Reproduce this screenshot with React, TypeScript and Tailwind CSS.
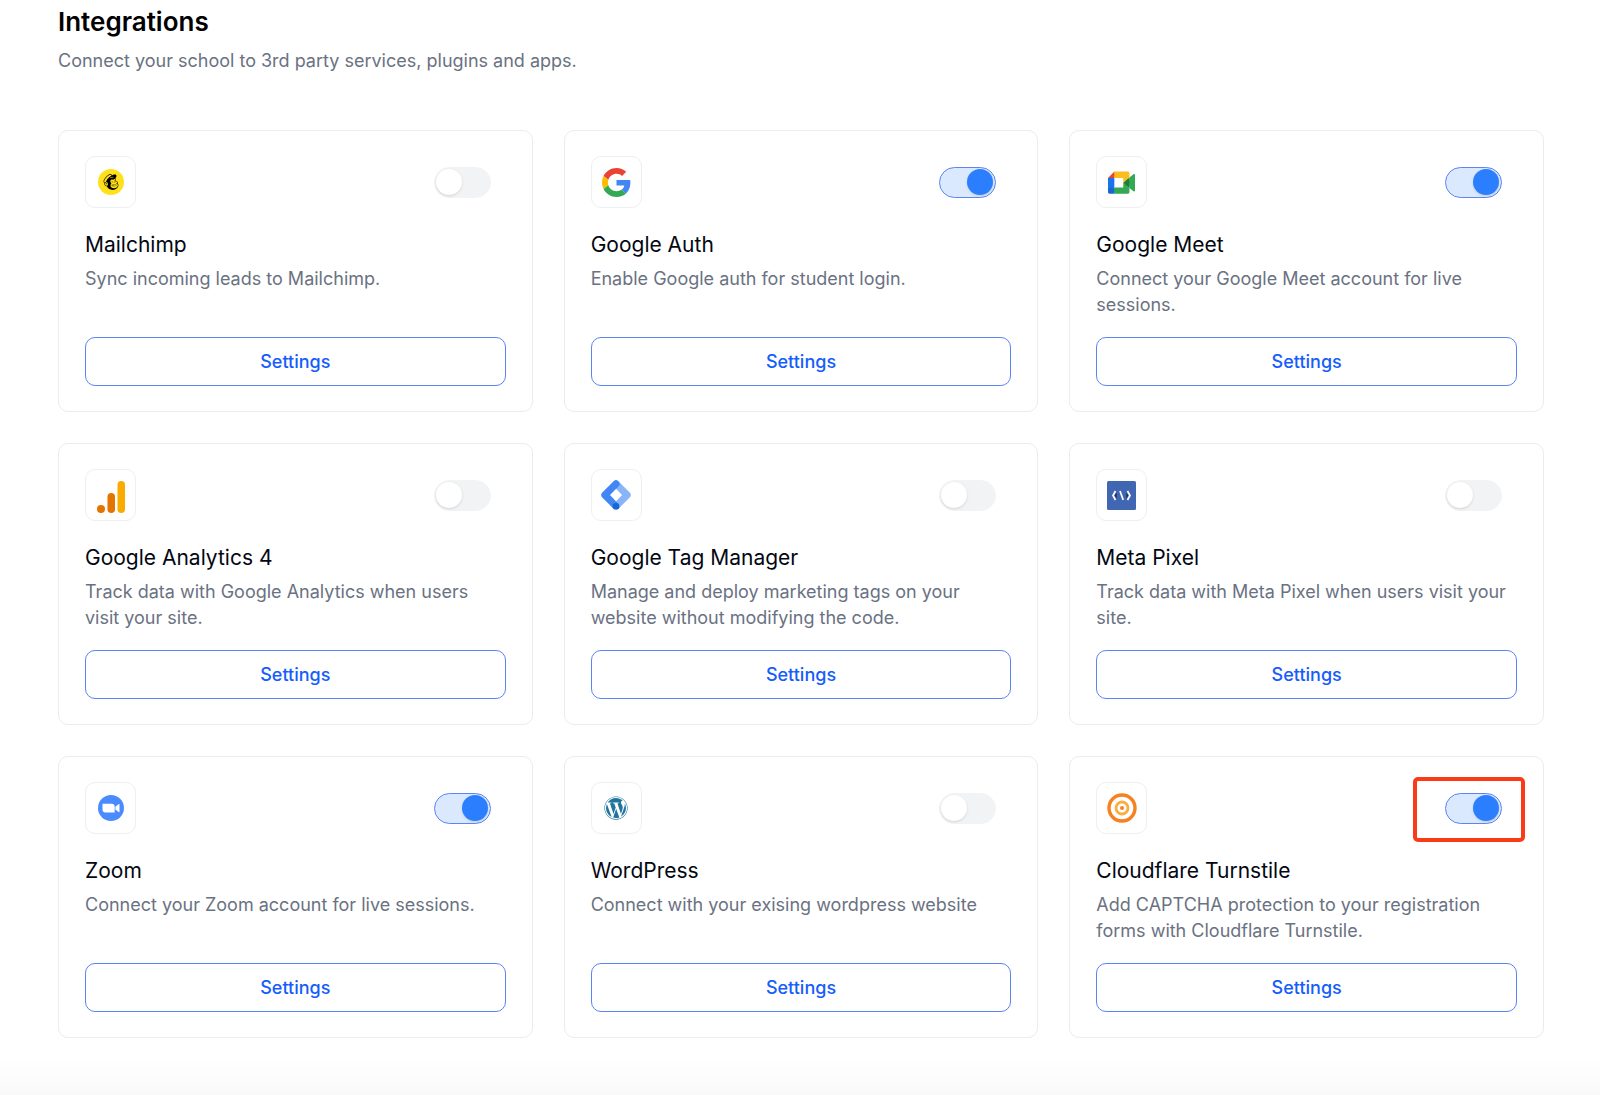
import React, { useState } from 'react';
import { FaMailchimp, FaWordpress } from 'react-icons/fa';

interface Integration {
  id: string;
  name: string;
  description: string;
  icon: React.ReactNode;
  enabled: boolean;
  highlighted?: boolean;
}

const MailchimpIcon = () => (
  <span className="flex size-[26px] items-center justify-center rounded-full bg-[#ffe01b]">
    <FaMailchimp className="size-[18px] text-black" />
  </span>
);

const GoogleIcon = () => (
  <svg viewBox="0 0 48 48" className="size-[29px]">
    <path fill="#EA4335" d="M24 9.5c3.54 0 6.71 1.22 9.21 3.6l6.85-6.85C35.9 2.38 30.47 0 24 0 14.62 0 6.51 5.38 2.56 13.22l7.98 6.19C12.43 13.72 17.74 9.5 24 9.5z" />
    <path fill="#4285F4" d="M46.98 24.55c0-1.57-.15-3.09-.38-4.55H24v9.02h12.94c-.58 2.96-2.26 5.48-4.78 7.18l7.73 6c4.51-4.18 7.09-10.36 7.09-17.65z" />
    <path fill="#FBBC05" d="M10.53 28.59c-.48-1.45-.76-2.99-.76-4.59s.27-3.14.76-4.59l-7.98-6.19C.92 16.46 0 20.12 0 24c0 3.88.92 7.54 2.56 10.78l7.97-6.19z" />
    <path fill="#34A853" d="M24 48c6.48 0 11.93-2.13 15.89-5.81l-7.73-6c-2.15 1.45-4.92 2.3-8.16 2.3-6.26 0-11.57-4.22-13.47-9.91l-7.98 6.19C6.51 42.62 14.62 48 24 48z" />
  </svg>
);

const MeetIcon = () => (
  <svg viewBox="0 -2 87.5 72" className="w-[27px] overflow-visible">
    <path fill="#188038" d="M49.5 36l8.53 9.75 11.47 7.33 2-17.02-2-16.64-11.69 6.44z" />
    <path fill="#1967d2" d="M0 51.5V66c0 3.315 2.685 6 6 6h14.5l3-10.96-3-9.54-9.95-3z" />
    <path fill="#ea4335" d="M20.5 0L0 20.5l10.55 3 9.95-3 2.95-9.41z" />
    <path fill="#1a73e8" d="M20.5 20.5H0v31h20.5z" />
    <path fill="#34a853" d="M82.6 8.68L69.5 19.42v33.66l13.16 10.79c1.97 1.54 4.85.135 4.85-2.37V11c0-2.535-2.945-3.925-4.91-2.32zM49.5 36v15.5h-29V72h43c3.315 0 6-2.685 6-6V53.08z" />
    <path fill="#fbbc1c" d="M63.5 0h-43v20.5h29V36l20-16.57V6c0-3.315-2.685-6-6-6z" />
  </svg>
);

const AnalyticsIcon = () => (
  <svg viewBox="0 -2 28 36" className="h-9 w-7">
    <rect x="20.500" y="2" width="7.500" height="32" rx="3.750" fill="#f9ab00" />
    <rect x="10.500" y="14" width="7.500" height="20" rx="3.750" fill="#e37400" />
    <circle cx="4" cy="30" r="4" fill="#e37400" />
  </svg>
);

const TagManagerIcon = () => (
  <svg viewBox="0 0 30 30" className="size-[30px]">
    <path fill="#8ab4f8" d="M12.6 1.3a3.4 3.4 0 0 1 4.8 0l11.3 11.3a3.4 3.4 0 0 1 0 4.8L17.4 28.7l-4.8-4.8L21 15l-8.400-8.800z" />
    <path fill="#4285f4" d="M12.600 1.300L1.300 12.600a3.400 3.400 0 0 0 0 4.800l11.300 11.300 4.800-4.800L9 15l8.400-8.600a3.400 3.400 0 0 0-4.800-5.100z" />
    <circle cx="15" cy="26.400" r="3.400" fill="#1967d2" />
  </svg>
);

const PixelIcon = () => (
  <svg viewBox="0 0 29 29" className="size-[29px]" fill="none">
    <rect width="29" height="29" rx="1.500" fill="#4267b2" />
    <path d="M9.600 11.800v5.600L8 14.600zM19.400 11.800v5.600l1.600-2.800z" fill="#14213d" />
    <g stroke="#fff" strokeWidth="1.700">
      <path d="M8.500 10L6 14.500 8.500 19" />
      <path d="M20.500 10L23 14.500 20.500 19" />
      <path d="M13 10l3.200 9" />
    </g>
  </svg>
);

const ZoomIcon = () => (
  <svg viewBox="0 0 26 26" className="size-[26px]">
    <circle cx="13" cy="13" r="13" fill="#4a8cff" />
    <path fill="#fff" d="M4.500 8.700h9.300c1.700 0 2.900 1.200 2.900 2.900v5.900H7.300c-1.600 0-2.800-1.200-2.800-2.800zM17.400 11.700l3.200-2.500c.5-.4.900-.2.900.4v7c0 .6-.4.800-.9.400l-3.200-2.500z" />
  </svg>
);

const TurnstileIcon = () => (
  <svg viewBox="0 0 30 30" className="size-[30px]" fill="none">
    <circle cx="15" cy="15" r="13" stroke="#f6821f" strokeWidth="3.400" />
    <circle cx="15" cy="15" r="6" stroke="#fbad41" strokeWidth="2.800" />
    <circle cx="15" cy="15" r="2" fill="#f6821f" />
  </svg>
);

const integrations: Integration[] = [
  { id: 'mailchimp', name: 'Mailchimp', description: 'Sync incoming leads to Mailchimp.', icon: <MailchimpIcon />, enabled: false },
  { id: 'google-auth', name: 'Google Auth', description: 'Enable Google auth for student login.', icon: <GoogleIcon />, enabled: true },
  { id: 'google-meet', name: 'Google Meet', description: 'Connect your Google Meet account for live sessions.', icon: <MeetIcon />, enabled: true },
  { id: 'analytics', name: 'Google Analytics 4', description: 'Track data with Google Analytics when users visit your site.', icon: <AnalyticsIcon />, enabled: false },
  { id: 'tag-manager', name: 'Google Tag Manager', description: 'Manage and deploy marketing tags on your website without modifying the code.', icon: <TagManagerIcon />, enabled: false },
  { id: 'meta-pixel', name: 'Meta Pixel', description: 'Track data with Meta Pixel when users visit your site.', icon: <PixelIcon />, enabled: false },
  { id: 'zoom', name: 'Zoom', description: 'Connect your Zoom account for live sessions.', icon: <ZoomIcon />, enabled: true },
  { id: 'wordpress', name: 'WordPress', description: 'Connect with your exising wordpress website', icon: <FaWordpress className="size-6 text-[#21759b]" />, enabled: false },
  { id: 'turnstile', name: 'Cloudflare Turnstile', description: 'Add CAPTCHA protection to your registration forms with Cloudflare Turnstile.', icon: <TurnstileIcon />, enabled: true, highlighted: true },
];

const IntegrationCard: React.FC<{ item: Integration }> = ({ item }) => {
  const [enabled, setEnabled] = useState(item.enabled);

  return (
    <li className="flex flex-col rounded-[10px] border border-[#ebecee] px-[26px] py-[25px]">
      <div className="flex items-center justify-between">
        <div className="flex h-[52px] w-[51px] items-center justify-center rounded-[10px] border border-[#eeeff1]">
          {item.icon}
        </div>
        <div className="relative mr-[15px] flex">
          <input
            type="checkbox"
            role="switch"
            aria-labelledby={item.id}
            checked={enabled}
            onChange={(e) => setEnabled(e.target.checked)}
            className="flex h-[31px] w-[57px] cursor-pointer appearance-none items-center rounded-full border border-[#f2f3f5] bg-[#f2f3f5] px-px before:size-[26px] before:rounded-full before:bg-white before:shadow-sm before:content-[''] checked:justify-end checked:border-[#5b84f5] checked:bg-[#dbe9fe] checked:px-[2px] checked:before:bg-[#2b7fff]"
          />
          {/* Callout frame around the switch */}
          {item.highlighted && (
            <span className="pointer-events-none absolute -top-4 -right-[23px] -bottom-[18px] -left-8 rounded-[5px] border-4 border-[#f93c17]" />
          )}
        </div>
      </div>
      <h2 id={item.id} className="mt-6 text-[21px] leading-[26px] font-normal text-[#030712]">
        {item.name}
      </h2>
      <p className="mt-2 mb-[19px] min-h-[52px] text-[18px] leading-[26px] text-[#6a7282]">{item.description}</p>
      <button
        type="button"
        className="mt-auto h-[49px] rounded-[10px] border border-[#5b84f5] text-[18px] leading-[26px] font-medium text-[#155dfc]"
      >
        Settings
      </button>
    </li>
  );
};

export default function App() {
  return (
    <div className="flex min-h-screen flex-col bg-white font-['Inter',sans-serif]">
      <main className="pt-1 pr-[56px] pl-[58px]">
        <h1 className="text-[26px] leading-9 font-semibold text-black">Integrations</h1>
        <p className="mt-2 text-[18px] leading-[26px] text-[#6a7282]">
          Connect your school to 3rd party services, plugins and apps.
        </p>
        <ul className="mt-14 grid grid-cols-3 gap-[31px]">
          {integrations.map((item) => (
            <IntegrationCard key={item.id} item={item} />
          ))}
        </ul>
      </main>
      <div className="mt-auto h-9 bg-linear-to-b from-white to-[#f9f9f9]" />
    </div>
  );
}
